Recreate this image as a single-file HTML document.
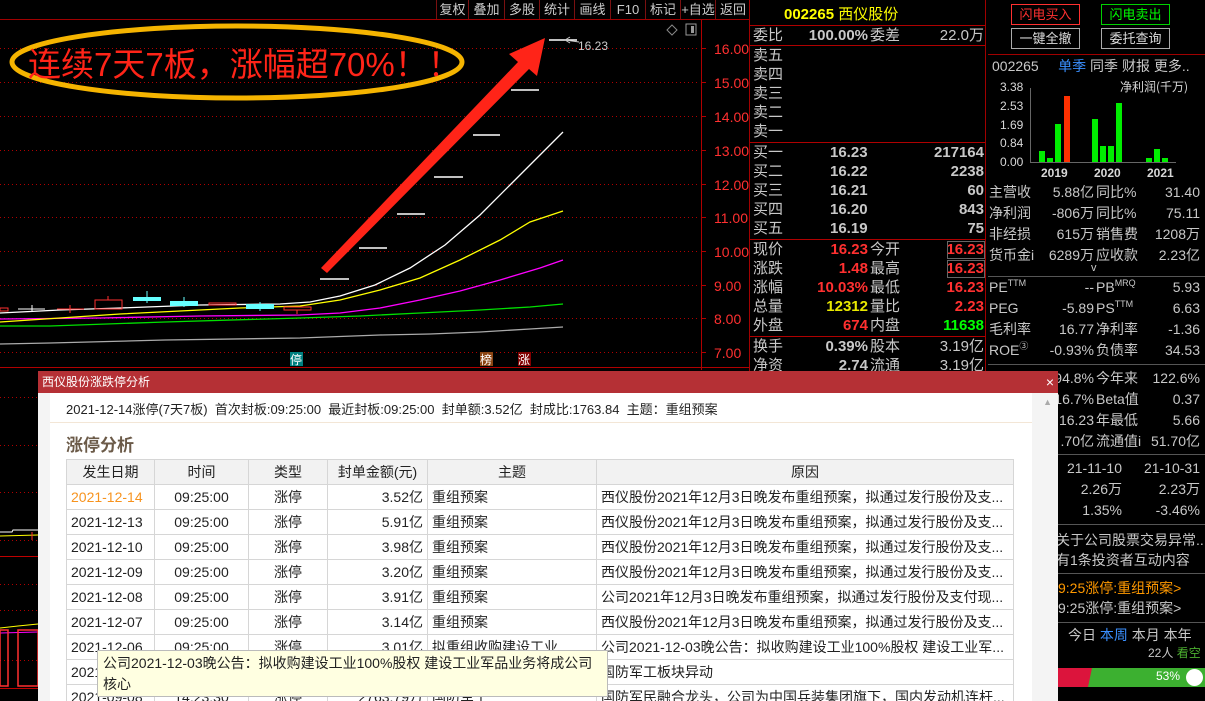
<!DOCTYPE html>
<html><head><meta charset="utf-8"><style>
*{margin:0;padding:0;box-sizing:border-box}
body{width:1205px;height:701px;background:#000;overflow:hidden;position:relative;font-family:"Liberation Sans","Noto Sans CJK SC",sans-serif;color:#c0c0c0}
.a{position:absolute;white-space:nowrap}
.tb{position:absolute;top:0;height:19px;font-size:13px;color:#ccc;line-height:19px;text-align:center;border-left:1px solid #7a1010}
.r{color:#ff3030}.y{color:#e8e800}.g{color:#00ff00}.w{color:#d8d8d8}
.ob{font-size:15px;line-height:19px;color:#c8c8c8}
.hl{position:absolute;height:1px;background:#b00000}
.rp{font-size:14px;line-height:21px;color:#c8c8c8}
sup{font-size:9px;line-height:0;vertical-align:6px}
table{border-collapse:collapse;font-size:14px;color:#222}
td{border:1px solid #d6d6d6;height:25px;padding:0 4px;white-space:nowrap;overflow:hidden}
</style></head><body>

<div class="hl" style="left:0;top:19px;width:750px;background:#a00000"></div>
<div class="tb" style="left:436px;width:32px">复权</div>
<div class="tb" style="left:468px;width:36px">叠加</div>
<div class="tb" style="left:504px;width:35px">多股</div>
<div class="tb" style="left:539px;width:35px">统计</div>
<div class="tb" style="left:574px;width:36px">画线</div>
<div class="tb" style="left:610px;width:35px">F10</div>
<div class="tb" style="left:645px;width:35px">标记</div>
<div class="tb" style="left:680px;width:35px">+自选</div>
<div class="tb" style="left:715px;width:35px">返回</div>

<svg class="a" style="left:0;top:0" width="750" height="701">
<g stroke="#b00000" stroke-dasharray="1 3" stroke-width="1">
<line x1="0" y1="48.5" x2="700" y2="48.5"/><line x1="0" y1="82.5" x2="700" y2="82.5"/><line x1="0" y1="116.5" x2="700" y2="116.5"/><line x1="0" y1="150.5" x2="700" y2="150.5"/><line x1="0" y1="184.5" x2="700" y2="184.5"/><line x1="0" y1="217.5" x2="700" y2="217.5"/><line x1="0" y1="251.5" x2="700" y2="251.5"/><line x1="0" y1="285.5" x2="700" y2="285.5"/><line x1="0" y1="318.5" x2="700" y2="318.5"/><line x1="0" y1="352.5" x2="700" y2="352.5"/>
<line x1="0" y1="397.5" x2="38" y2="397.5"/><line x1="0" y1="445.5" x2="38" y2="445.5"/><line x1="0" y1="492.5" x2="38" y2="492.5"/><line x1="0" y1="540.5" x2="38" y2="540.5"/><line x1="0" y1="584.5" x2="38" y2="584.5"/><line x1="0" y1="610.5" x2="38" y2="610.5"/><line x1="0" y1="660.5" x2="38" y2="660.5"/>
</g>
<line x1="701.5" y1="20" x2="701.5" y2="370" stroke="#b00000"/>
<line x1="0" y1="367.5" x2="750" y2="367.5" stroke="#b00000"/>
<line x1="0" y1="556.5" x2="38" y2="556.5" stroke="#c00000"/>
<g stroke="#b00000"><line x1="701" y1="48.5" x2="706" y2="48.5"/><line x1="701" y1="82.5" x2="706" y2="82.5"/><line x1="701" y1="116.5" x2="706" y2="116.5"/><line x1="701" y1="150.5" x2="706" y2="150.5"/><line x1="701" y1="184.5" x2="706" y2="184.5"/><line x1="701" y1="217.5" x2="706" y2="217.5"/><line x1="701" y1="251.5" x2="706" y2="251.5"/><line x1="701" y1="285.5" x2="706" y2="285.5"/><line x1="701" y1="318.5" x2="706" y2="318.5"/><line x1="701" y1="352.5" x2="706" y2="352.5"/></g>
<g fill="#ff3030" font-size="14" font-family="Liberation Sans">
<text x="714" y="54">16.00</text><text x="714" y="88">15.00</text><text x="714" y="122">14.00</text><text x="714" y="156">13.00</text><text x="714" y="190">12.00</text><text x="714" y="223">11.00</text><text x="714" y="257">10.00</text><text x="714" y="291">9.00</text><text x="714" y="324">8.00</text><text x="714" y="358">7.00</text>
</g>
<polyline fill="none" stroke="#aaa" stroke-width="1.3" points="0,344 50,343 165,340 300,338 380,335 430,334 480,332 530,329 563,327"/>
<polyline fill="none" stroke="#00e000" stroke-width="1.3" points="0,326 50,326 165,322 300,318 360,316 420,313 480,310 530,307 563,304"/>
<polyline fill="none" stroke="#ff00ff" stroke-width="1.3" points="0,319 100,318 200,316 300,315 340,313 380,308 420,300 460,291 500,280 540,268 563,260"/>
<polyline fill="none" stroke="#ffff00" stroke-width="1.3" points="0,322 60,318 120,314 180,311 240,308 300,306 340,300 380,290 420,278 460,260 500,240 530,222 563,211"/>
<polyline fill="none" stroke="#fff" stroke-width="1.3" points="0,313 60,310 120,308 200,305 280,304 310,302 340,296 375,285 410,268 445,245 480,215 510,185 540,155 563,132"/>
<g stroke-width="1">
<rect x="0" y="308" width="8" height="3" fill="none" stroke="#ff3030"/>
<line x1="18" y1="309" x2="45" y2="309" stroke="#fff"/><line x1="32" y1="305" x2="32" y2="312" stroke="#fff"/>
<line x1="57" y1="309" x2="84" y2="309" stroke="#ff3030"/><line x1="70" y1="305" x2="70" y2="313" stroke="#ff3030"/>
<rect x="95" y="300" width="27" height="9" fill="none" stroke="#ff3030"/><line x1="108" y1="296" x2="108" y2="300" stroke="#ff3030"/>
<rect x="133" y="297" width="28" height="4" fill="#6ff"/><line x1="147" y1="291" x2="147" y2="303" stroke="#6ff"/>
<rect x="170" y="301" width="28" height="5" fill="#6ff"/><line x1="184" y1="297" x2="184" y2="307" stroke="#6ff"/>
<rect x="209" y="303" width="27" height="2" fill="none" stroke="#ff3030"/>
<rect x="246" y="304" width="28" height="5" fill="#6ff"/><line x1="260" y1="302" x2="260" y2="311" stroke="#6ff"/>
<rect x="284" y="307" width="27" height="3" fill="none" stroke="#ff3030"/><line x1="297" y1="310" x2="297" y2="314" stroke="#ff3030"/>
</g>
<g stroke="#fff" stroke-width="1.5">
<line x1="320" y1="279" x2="349" y2="279"/><line x1="359" y1="248" x2="387" y2="248"/><line x1="397" y1="214" x2="425" y2="214"/><line x1="434" y1="177" x2="463" y2="177"/><line x1="473" y1="135" x2="500" y2="135"/><line x1="511" y1="90" x2="539" y2="90"/><line x1="549" y1="40" x2="577" y2="40"/>
</g>
<path d="M565,40 l5,-3 M565,40 l5,3 M565,40 l14,2" stroke="#ccc" fill="none"/>
<text x="578" y="50" fill="#ccc" font-size="12" font-family="Liberation Sans">16.23</text>
<polygon points="321,268 518,62 509,54 545,38 537,76 529,69 327,273" fill="#ff2418"/>
<ellipse cx="237" cy="62" rx="225" ry="36" fill="none" stroke="#f5b400" stroke-width="5"/>
<text x="28" y="76" fill="#ff2418" font-size="33" font-family="Liberation Sans,Noto Sans CJK SC,sans-serif">连续7天7板，涨幅超70%！！</text>
<path d="M672,25 l5,5 -5,5 -5,-5z" fill="none" stroke="#888"/>
<rect x="686" y="24" width="10" height="11" fill="none" stroke="#999"/><rect x="691" y="26" width="3" height="7" fill="#999"/>
<rect x="290" y="352" width="13" height="14" fill="#008080"/><text x="290" y="364" font-size="12" fill="#fff" font-family="Noto Sans CJK SC">停</text>
<rect x="480" y="352" width="13" height="14" fill="#8b4513"/><text x="480" y="364" font-size="12" fill="#fff" font-family="Noto Sans CJK SC">榜</text>
<rect x="518" y="352" width="13" height="14" fill="#800000"/><text x="518" y="364" font-size="12" fill="#fff" font-family="Noto Sans CJK SC">涨</text>
<polyline fill="none" stroke="#fff" points="0,532 12,532 13,530 38,530"/>
<polyline fill="none" stroke="#ffff00" points="0,536 38,535"/>
<line x1="32" y1="532" x2="32" y2="540" stroke="#ff3030"/>
<polyline fill="none" stroke="#ffff00" points="0,628 18,626 38,624"/>
<polyline fill="none" stroke="#ff00ff" points="0,633 38,632"/>
<rect x="0" y="630" width="8" height="56" fill="none" stroke="#ff3030" stroke-width="1.5"/>
<rect x="18" y="630" width="20" height="56" fill="none" stroke="#ff3030" stroke-width="1.5"/>
<line x1="0" y1="688.5" x2="38" y2="688.5" stroke="#c00000"/>
</svg>

<div style="position:absolute;left:749px;top:0;width:1px;height:701px;background:#a00000"></div>
<div style="position:absolute;left:985px;top:0;width:1px;height:371px;background:#a00000"></div>
<div class="a" style="left:784px;top:3px;font-size:15px;font-weight:bold;color:#ffff00">002265 <span style="font-weight:normal">西仪股份</span></div>
<div class="hl" style="left:750px;top:25px;width:235px"></div>
<div class="a ob" style="left:753px;top:26px">委比</div><div class="a ob r" style="left:790px;top:26px;width:78px;text-align:right;font-weight:bold">100.00%</div><div class="a ob" style="left:870px;top:26px">委差</div><div class="a ob r" style="left:920px;top:26px;width:64px;text-align:right">22.0万</div>
<div class="hl" style="left:750px;top:45px;width:235px"></div>
<div class="a ob" style="left:753px;top:46px;line-height:19px">卖五<br>卖四<br>卖三<br>卖二<br>卖一</div>
<div class="hl" style="left:750px;top:142px;width:235px"></div>
<div class="a ob" style="left:753px;top:143px">买一<br>买二<br>买三<br>买四<br>买五</div>
<div class="a ob r" style="left:830px;top:143px;font-weight:bold">16.23<br>16.22<br>16.21<br>16.20<br>16.19</div>
<div class="a ob y" style="left:900px;top:143px;width:84px;text-align:right;font-weight:bold">217164<br>2238<br>60<br>843<br>75</div>
<div class="hl" style="left:750px;top:239px;width:235px"></div>
<div class="a ob" style="left:753px;top:240px">现价<br>涨跌<br>涨幅<br>总量<br>外盘</div>
<div class="a ob" style="left:800px;top:240px;width:68px;text-align:right;font-weight:bold"><span class="r">16.23</span><br><span class="r">1.48</span><br><span class="r">10.03%</span><br><span class="y">12312</span><br><span class="r">674</span></div>
<div class="a ob" style="left:870px;top:240px">今开<br>最高<br>最低<br>量比<br>内盘</div>
<div class="a ob" style="left:900px;top:240px;width:84px;text-align:right;font-weight:bold"><span class="r">16.23</span><br><span class="r">16.23</span><br><span class="r">16.23</span><br><span class="r">2.23</span><br><span class="g">11638</span></div>
<div class="a" style="left:947px;top:241px;width:38px;height:18px;border:1px solid #666"></div>
<div class="a" style="left:947px;top:260px;width:38px;height:18px;border:1px solid #666"></div>
<div class="hl" style="left:750px;top:336px;width:235px"></div>
<div class="a ob" style="left:753px;top:337px">换手<br>净资</div>
<div class="a ob w" style="left:800px;top:337px;width:68px;text-align:right;font-weight:bold">0.39%<br>2.74</div>
<div class="a ob" style="left:870px;top:337px">股本<br>流通</div>
<div class="a ob w" style="left:900px;top:337px;width:84px;text-align:right">3.19亿<br>3.19亿</div>

<div class="a" style="left:1011px;top:4px;width:69px;height:21px;border:1px solid #ff3030;color:#ff3030;font-size:13px;text-align:center;line-height:19px">闪电买入</div>
<div class="a" style="left:1101px;top:4px;width:69px;height:21px;border:1px solid #00d000;color:#00ff00;font-size:13px;text-align:center;line-height:19px">闪电卖出</div>
<div class="a" style="left:1011px;top:28px;width:69px;height:21px;border:1px solid #aaa;color:#ddd;font-size:13px;text-align:center;line-height:19px">一键全撤</div>
<div class="a" style="left:1101px;top:28px;width:69px;height:21px;border:1px solid #aaa;color:#ddd;font-size:13px;text-align:center;line-height:19px">委托查询</div>
<div class="hl" style="left:988px;top:54px;width:217px;background:#a00000"></div>
<div class="a rp" style="left:992px;top:56px">002265 &nbsp; &nbsp; <span style="color:#3a8fff">单季</span> 同季 财报 更多..</div>
<svg class="a" style="left:986px;top:76px" width="219" height="110">
<g fill="#d8d8d8" font-size="12" font-family="Liberation Sans"><text x="14" y="15">3.38</text><text x="14" y="34">2.53</text><text x="14" y="53">1.69</text><text x="14" y="71">0.84</text><text x="14" y="90">0.00</text></g>
<line x1="44.5" y1="12" x2="44.5" y2="86" stroke="#666"/><line x1="44" y1="86.5" x2="190" y2="86.5" stroke="#666"/>
<text x="134" y="15" fill="#d8d8d8" font-size="12" font-family="Noto Sans CJK SC">净利润(千万)</text>
<g fill="#00ee00"><rect x="53" y="75" width="6" height="11"/><rect x="61" y="82" width="6" height="4"/><rect x="69" y="48" width="6" height="38"/><rect x="106" y="43" width="6" height="43"/><rect x="114" y="70" width="6" height="16"/><rect x="122" y="70" width="6" height="16"/><rect x="130" y="27" width="6" height="59"/><rect x="160" y="82" width="6" height="4"/><rect x="168" y="73" width="6" height="13"/><rect x="176" y="82" width="6" height="4"/></g>
<rect x="78" y="20" width="6" height="66" fill="#ff3000"/>
<g fill="#d8d8d8" font-size="12" font-weight="bold" font-family="Liberation Sans"><text x="55" y="101">2019</text><text x="108" y="101">2020</text><text x="161" y="101">2021</text></g>
</svg>
<div class="a rp" style="left:989px;top:182px">主营收<br>净利润<br>非经损<br>货币金i</div>
<div class="a rp" style="left:1036px;top:182px;width:58px;text-align:right">5.88亿<br>-806万<br>615万<br>6289万</div>
<div class="a rp" style="left:1096px;top:182px">同比%<br>同比%<br>销售费<br>应收款</div>
<div class="a rp" style="left:1140px;top:182px;width:60px;text-align:right">31.40<br>75.11<br>1208万<br>2.23亿</div>
<div class="a" style="left:1091px;top:262px;font-size:11px;color:#ccc">v</div>
<div class="hl" style="left:988px;top:276px;width:217px;background:#555"></div>
<div class="a rp" style="left:989px;top:277px">PE<sup>TTM</sup><br>PEG<br>毛利率<br>ROE<sup>③</sup></div>
<div class="a rp" style="left:1030px;top:277px;width:64px;text-align:right">--<br>-5.89<br>16.77<br>-0.93%</div>
<div class="a rp" style="left:1096px;top:277px">PB<sup>MRQ</sup><br>PS<sup>TTM</sup><br>净利率<br>负债率</div>
<div class="a rp" style="left:1140px;top:277px;width:60px;text-align:right">5.93<br>6.63<br>-1.36<br>34.53</div>
<div class="hl" style="left:988px;top:364px;width:217px;background:#555"></div>
<div class="a rp" style="left:1040px;top:368px;width:54px;text-align:right">94.8%<br>16.7%<br>16.23<br>.70亿</div>
<div class="a rp" style="left:1096px;top:368px">今年来<br>Beta值<br>年最低<br>流通值i</div>
<div class="a rp" style="left:1150px;top:368px;width:50px;text-align:right">122.6%<br>0.37<br>5.66<br>51.70亿</div>
<div class="hl" style="left:1058px;top:454px;width:147px;background:#555"></div>
<div class="a rp" style="left:1060px;top:458px;width:62px;text-align:right">21-11-10<br>2.26万<br>1.35%</div>
<div class="a rp" style="left:1130px;top:458px;width:70px;text-align:right">21-10-31<br>2.23万<br>-3.46%</div>
<div class="hl" style="left:1058px;top:524px;width:147px;background:#555"></div>
<div class="a rp" style="left:1056px;top:530px;line-height:20px">关于公司股票交易异常...<br>有1条投资者互动内容</div>
<div class="hl" style="left:1058px;top:573px;width:147px;background:#555"></div>
<div class="a rp" style="left:1058px;top:578px;line-height:20px"><span style="color:#ff9900">9:25涨停:重组预案&gt;</span><br>9:25涨停:重组预案&gt;</div>
<div class="hl" style="left:1058px;top:622px;width:147px;background:#555"></div>
<div class="a rp" style="left:1068px;top:625px">今日 <span style="color:#3a8fff">本周</span> 本月 本年</div>
<div class="a rp" style="left:1148px;top:645px;font-size:12px;line-height:16px">22人 <span style="color:#4caf30">看空</span></div>
<div class="a" style="left:1058px;top:668px;width:44px;height:19px;background:#dc143c"></div>
<div class="a" style="left:1088px;top:668px;width:117px;height:19px;background:#3cb030;clip-path:polygon(4px 0,100% 0,100% 100%,0 100%)"></div>
<div class="a" style="left:1156px;top:669px;color:#fff;font-size:12px">53%</div>
<div class="a" style="left:1186px;top:669px;width:17px;height:17px;border-radius:50%;background:#fff"></div>

<div class="a" style="left:38px;top:371px;width:1020px;height:330px;background:#f4f4f4;overflow:hidden">
 <div style="height:22px;background:#b53035;color:#fff;font-size:12px;line-height:22px;padding-left:4px">西仪股份涨跌停分析<span style="position:absolute;right:4px;top:0;font-size:14px">×</span></div>
 <div style="position:absolute;left:12px;top:22px;width:982px;height:308px;background:#fff">
  <div style="position:absolute;left:16px;top:6px;font-size:13px;color:#222">2021-12-14涨停(7天7板) &nbsp;首次封板:09:25:00 &nbsp;最近封板:09:25:00 &nbsp;封单额:3.52亿 &nbsp;封成比:1763.84 &nbsp;主题：重组预案</div>
  <div style="position:absolute;left:0;top:29px;width:982px;height:1px;background:#f3e6d6"></div>
  <div style="position:absolute;left:16px;top:38px;font-size:17px;color:#6b5a48;font-weight:bold">涨停分析</div>
  <table style="position:absolute;left:16px;top:66px;width:948px;table-layout:fixed">
   <colgroup><col style="width:88px"><col style="width:94px"><col style="width:79px"><col style="width:100px"><col style="width:169px"><col></colgroup>
   <tr style="background:#f2f2f2;text-align:center"><td>发生日期</td><td>时间</td><td>类型</td><td>封单金额(元)</td><td>主题</td><td>原因</td></tr>
   <tr><td style="color:#f7931e">2021-12-14</td><td align="center">09:25:00</td><td align="center">涨停</td><td align="right">3.52亿</td><td>重组预案</td><td>西仪股份2021年12月3日晚发布重组预案，拟通过发行股份及支...</td></tr>
   <tr><td>2021-12-13</td><td align="center">09:25:00</td><td align="center">涨停</td><td align="right">5.91亿</td><td>重组预案</td><td>西仪股份2021年12月3日晚发布重组预案，拟通过发行股份及支...</td></tr>
   <tr><td>2021-12-10</td><td align="center">09:25:00</td><td align="center">涨停</td><td align="right">3.98亿</td><td>重组预案</td><td>西仪股份2021年12月3日晚发布重组预案，拟通过发行股份及支...</td></tr>
   <tr><td>2021-12-09</td><td align="center">09:25:00</td><td align="center">涨停</td><td align="right">3.20亿</td><td>重组预案</td><td>西仪股份2021年12月3日晚发布重组预案，拟通过发行股份及支...</td></tr>
   <tr><td>2021-12-08</td><td align="center">09:25:00</td><td align="center">涨停</td><td align="right">3.91亿</td><td>重组预案</td><td>公司2021年12月3日晚发布重组预案，拟通过发行股份及支付现...</td></tr>
   <tr><td>2021-12-07</td><td align="center">09:25:00</td><td align="center">涨停</td><td align="right">3.14亿</td><td>重组预案</td><td>西仪股份2021年12月3日晚发布重组预案，拟通过发行股份及支...</td></tr>
   <tr><td>2021-12-06</td><td align="center">09:25:00</td><td align="center">涨停</td><td align="right">3.01亿</td><td>拟重组收购建设工业</td><td>公司2021-12-03晚公告：拟收购建设工业100%股权 建设工业军...</td></tr>
   <tr><td>2021-12-03</td><td align="center">09:25:00</td><td align="center">涨停</td><td align="right">2.50亿</td><td>国防军工</td><td>国防军工板块异动</td></tr>
   <tr><td>2021-09-08</td><td align="center">14:23:30</td><td align="center">涨停</td><td align="right">2763.79万</td><td>国防军工</td><td>国防军民融合龙头，公司为中国兵装集团旗下，国内发动机连杆...</td></tr>
  </table>
 </div>
 <div style="position:absolute;right:6px;top:26px;font-size:9px;color:#aaa">▲</div>
</div>
<div class="a" style="left:97px;top:650px;width:511px;height:47px;background:#ffffe1;border:1px solid #bbb;font-size:14px;color:#222;padding:2px 5px;line-height:21px;white-space:normal">公司2021-12-03晚公告：拟收购建设工业100%股权 建设工业军品业务将成公司核心</div>
</body></html>
